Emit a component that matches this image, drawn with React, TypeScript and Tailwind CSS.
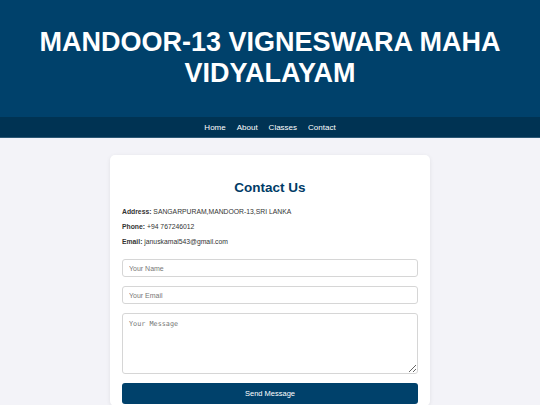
export default function App() {
  return (
    <div className="min-h-screen bg-[#f3f3f8] font-['Liberation_Sans',Arial,sans-serif]">
      <header className="bg-[#00416b] h-[117px] flex items-center justify-center px-[10px]">
        <h1 className="text-white text-center font-bold text-[27px] leading-[31px] pb-[1px]">
          MANDOOR-13 VIGNESWARA MAHA VIDYALAYAM
        </h1>
      </header>
      <nav className="bg-[#003353] h-[21px] pt-[1px] flex items-center justify-center gap-[11px] border-b border-[#2c5875]">
        <a className="text-white text-[8px]">Home</a>
        <a className="text-white text-[8px]">About</a>
        <a className="text-white text-[8px]">Classes</a>
        <a className="text-white text-[8px]">Contact</a>
      </nav>
      <main className="flex justify-center pt-[17px]">
        <div className="w-[320px] bg-white rounded-[5px] shadow-[0_1px_4px_rgba(0,0,0,0.08)] px-[12px] pt-[24px] pb-[2px]">
          <h2 className="text-center text-[#003b66] font-bold text-[13.5px] leading-[18px]">Contact Us</h2>
          <div className="mt-[10px] flex flex-col gap-[6px] text-[6.8px] leading-[9px] text-[#333]">
            <p><span className="font-bold">Address:</span> SANGARPURAM,MANDOOR-13,SRI LANKA</p>
            <p><span className="font-bold">Phone:</span> +94 767246012</p>
            <p><span className="font-bold">Email:</span> januskamal543@gmail.com</p>
          </div>
          <form className="mt-[13px] flex flex-col gap-[9px]">
            <input
              placeholder="Your Name"
              className="h-[18px] border border-[#d6d6d6] rounded-[3px] px-[6px] text-[7px] placeholder:text-[#777]"
            />
            <input
              placeholder="Your Email"
              className="h-[18px] border border-[#d6d6d6] rounded-[3px] px-[6px] text-[7px] placeholder:text-[#777]"
            />
            <textarea
              placeholder="Your Message"
              className="h-[61px] border border-[#d6d6d6] rounded-[3px] px-[6px] py-[5px] text-[6.8px] font-['DejaVu_Sans_Mono',monospace] placeholder:text-[#777]"
            />
            <button
              type="button"
              className="h-[21px] bg-[#00416b] text-white rounded-[3px] text-[7.5px]"
            >
              Send Message
            </button>
          </form>
        </div>
      </main>
    </div>
  )
}
